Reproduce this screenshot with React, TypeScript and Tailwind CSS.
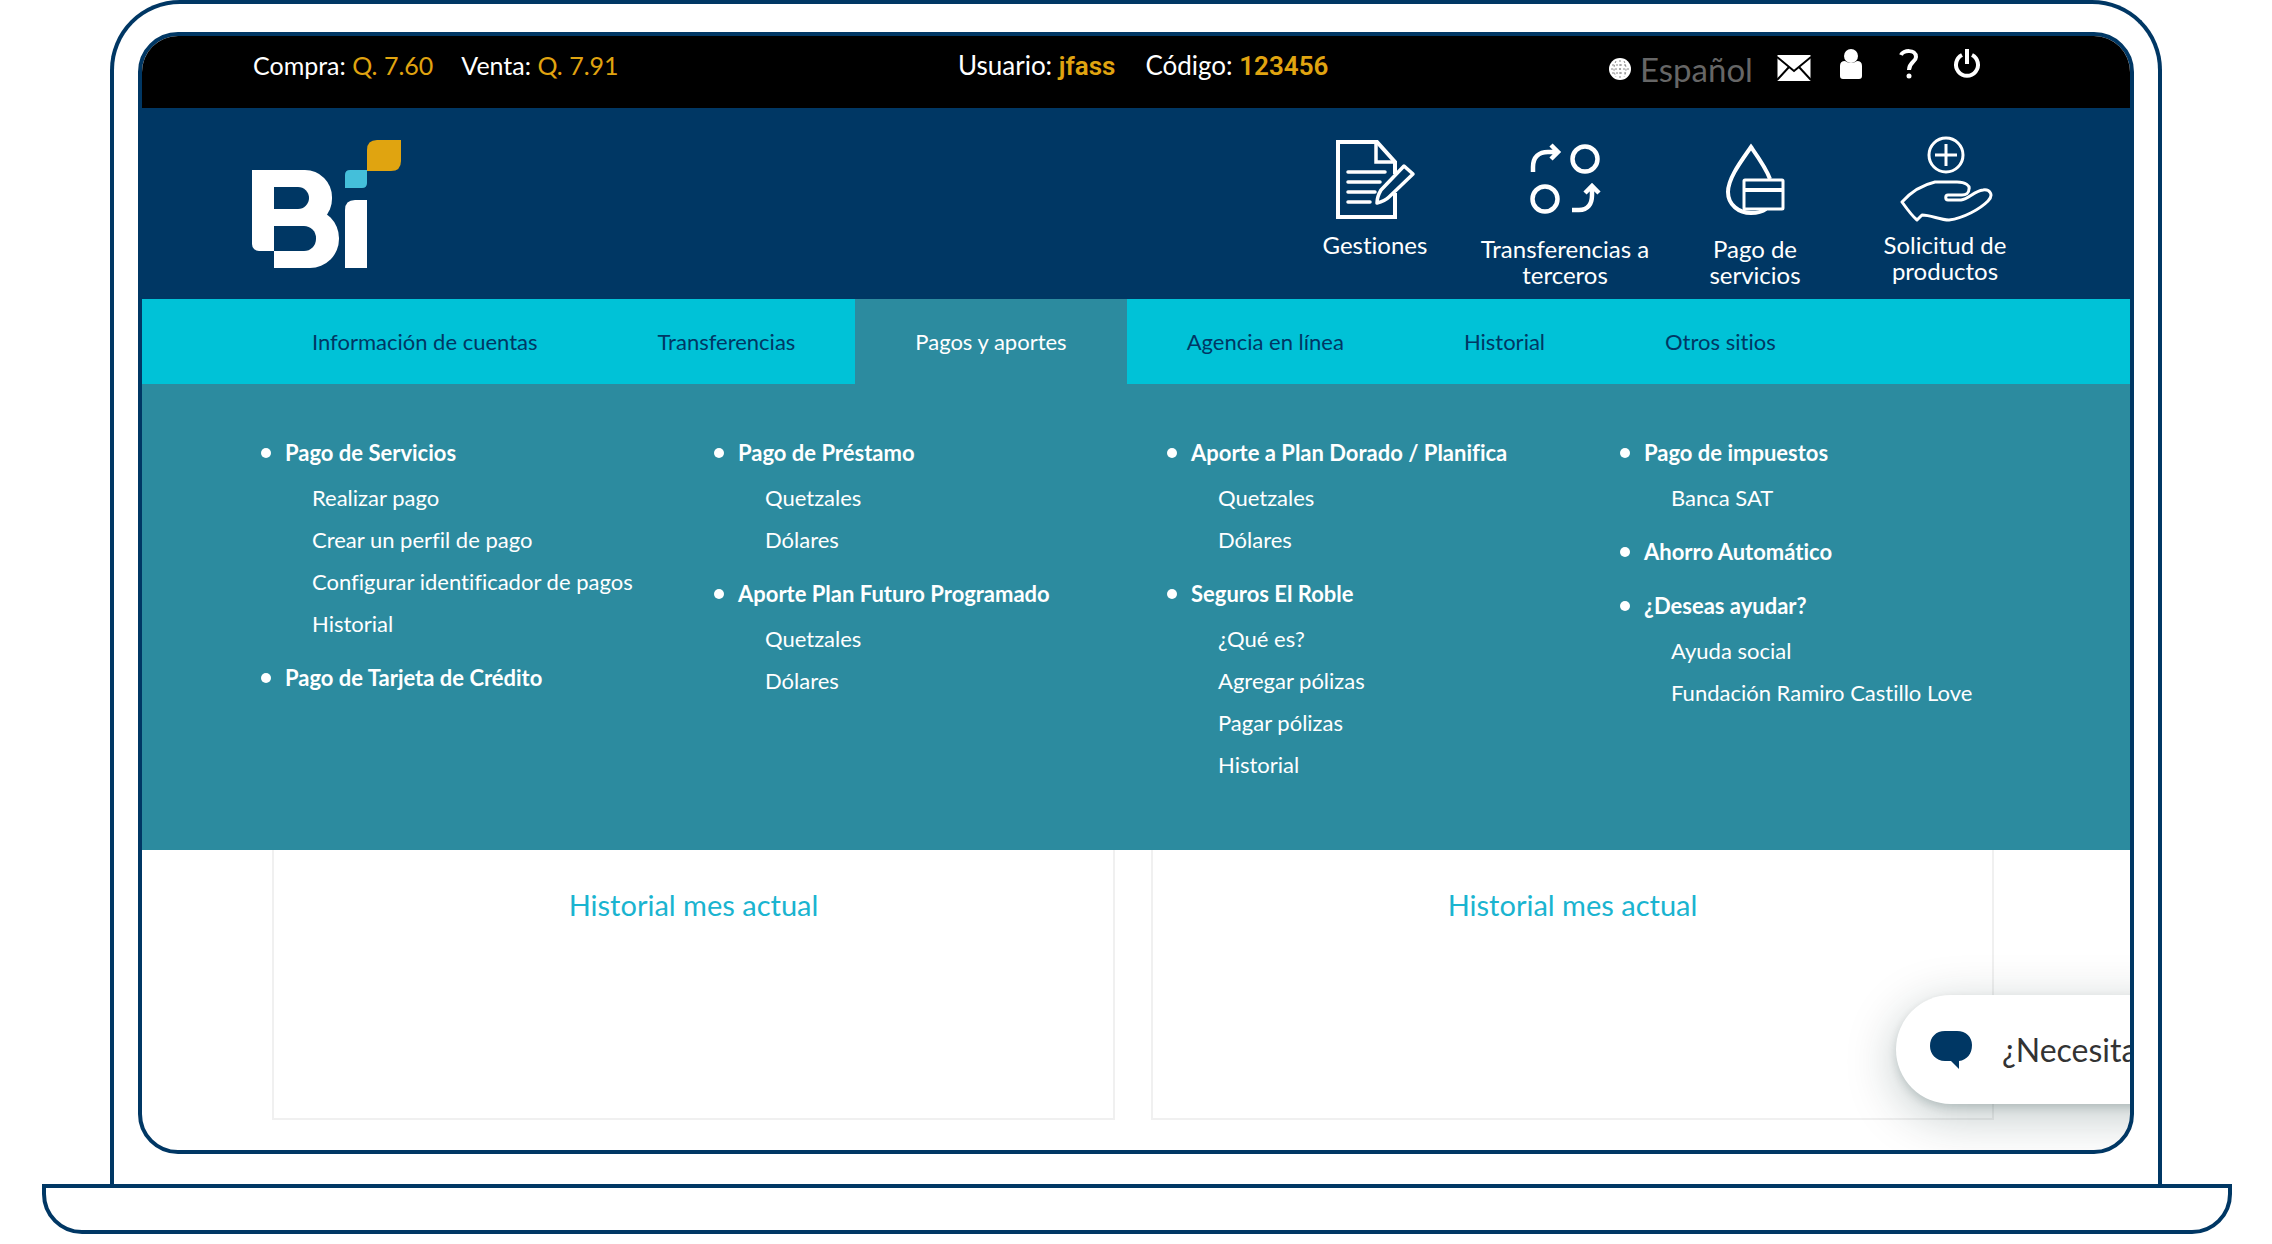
import React from 'react';

const tabs = [
	'Información de cuentas',
	'Transferencias',
	'Pagos y aportes',
	'Agencia en línea',
	'Historial',
	'Otros sitios',
];

const activeTab = 'Pagos y aportes';

const menuColumns = [
	[
		{
			title: 'Pago de Servicios',
			items: ['Realizar pago', 'Crear un perfil de pago', 'Configurar identificador de pagos', 'Historial'],
		},
		{ title: 'Pago de Tarjeta de Crédito', items: [] },
	],
	[
		{ title: 'Pago de Préstamo', items: ['Quetzales', 'Dólares'] },
		{ title: 'Aporte Plan Futuro Programado', items: ['Quetzales', 'Dólares'] },
	],
	[
		{ title: 'Aporte a Plan Dorado / Planifica', items: ['Quetzales', 'Dólares'] },
		{ title: 'Seguros El Roble', items: ['¿Qué es?', 'Agregar pólizas', 'Pagar pólizas', 'Historial'] },
	],
	[
		{ title: 'Pago de impuestos', items: ['Banca SAT'] },
		{ title: 'Ahorro Automático', items: [] },
		{ title: '¿Deseas ayudar?', items: ['Ayuda social', 'Fundación Ramiro Castillo Love'] },
	],
];

function Logo() {
	return (
		<svg className="h-32 w-[150px]" viewBox="0 0 150 128" role="img" aria-label="Bi">
			<g fill="#fff">
				<rect x="0" y="30" width="40" height="81" rx="7" />
				<rect x="0" y="30" width="40" height="40" />
				<rect x="22" y="30" width="58" height="56" rx="27" />
				<rect x="22" y="30" width="30" height="50" />
				<rect x="22" y="69" width="65" height="59" rx="29" />
				<rect x="22" y="69" width="30" height="59" />
			</g>
			<g fill="#003764">
				<rect x="22" y="47" width="35" height="22" rx="11" />
				<rect x="22" y="47" width="14" height="22" />
				<rect x="22" y="86" width="42" height="25" rx="12" />
				<rect x="22" y="86" width="14" height="25" />
				<rect x="0" y="111" width="22" height="17" />
			</g>
			<path d="M93 70Q93 60 103 60H115V128H93Z" fill="#fff" />
			<path d="M93 35Q93 30 98 30H115V43Q115 48 110 48H93Z" fill="#44bfda" />
			<path d="M115 10Q115 0 125 0H149V21Q149 31 139 31H115Z" fill="#e0a410" />
		</svg>
	);
}

function GestionesIcon() {
	return (
		<svg className="h-24 w-24" viewBox="0 0 96 96" fill="none" stroke="#fff" strokeWidth="4" aria-hidden="true">
			<path d="M68 38V26L50 6H11V81H68V57" />
			<path d="M49 7V26H67" strokeWidth="3.5" />
			<path d="M21 36H58M21 46H53M21 56H48M21 66H43" strokeWidth="3.5" strokeLinecap="round" />
			<path
				d="M77 30L86 38L62 61C58 65 54 66 50 67C50 63 51 59 54 54Z"
				fill="#003764"
				strokeWidth="3.5"
				strokeLinejoin="round"
			/>
		</svg>
	);
}

function TercerosIcon() {
	return (
		<svg className="h-24 w-24" viewBox="0 0 96 96" fill="none" stroke="#fff" strokeWidth="4.5" aria-hidden="true">
			<circle cx="68" cy="19" r="12.5" />
			<circle cx="28" cy="59" r="12.5" />
			<path d="M16 32V27C16 17 22 12 31 12H39M34 5L41 12L34 19" />
			<path d="M55 70H62C71 70 75 64 75 55V47M68 53L75 46L82 53" />
		</svg>
	);
}

function ServiciosIcon() {
	return (
		<svg className="h-24 w-24" viewBox="0 0 96 96" fill="none" stroke="#fff" strokeWidth="4" aria-hidden="true">
			<path d="M63 39C59 28 51 17 44 7C35 20 21 38 21 52C21 65 32 73 44 73C50 73 55 72 59 69" />
			<rect x="37" y="40" width="39" height="29" rx="1" fill="#003764" strokeWidth="3" />
			<path d="M37 50H76" />
		</svg>
	);
}

function ProductosIcon() {
	return (
		<svg className="h-24 w-24" viewBox="0 0 96 96" fill="none" stroke="#fff" strokeWidth="3" aria-hidden="true">
			<circle cx="49" cy="19" r="17" />
			<path d="M49 8V30M38 19H60" />
			<path
				d="M5 66C13 57 25 49 38 46H60C69 46 73 50 72 53C72 57 69 59 65 59H51C48 59 48 64 51 64H64C72 63 77 55 86 54C93 53 97 59 91 65C83 73 67 82 52 84C43 84 34 79 25 79L20 84C15 80 10 73 5 66Z"
				strokeLinejoin="round"
			/>
		</svg>
	);
}

const actions = [
	{ label: 'Gestiones', icon: <GestionesIcon />, spacing: '' },
	{ label: 'Transferencias a terceros', icon: <TercerosIcon />, spacing: 'pt-1' },
	{ label: 'Pago de servicios', icon: <ServiciosIcon />, spacing: 'pt-1' },
	{ label: 'Solicitud de productos', icon: <ProductosIcon />, spacing: '' },
];

function TopBar() {
	return (
		<div className="grid h-[72px] grid-cols-[705fr_650fr_522fr] bg-black pt-3 pl-[111px] text-[26px] leading-[34px] whitespace-nowrap text-white">
			<div className="flex gap-7 text-[25px]">
				<span>
					Compra: <span className="text-[#e0a410]">Q. 7.60</span>
				</span>
				<span>
					Venta: <span className="text-[#e0a410]">Q. 7.91</span>
				</span>
			</div>

			<div className="flex gap-[30px]">
				<span>
					Usuario: <span className="font-[Roboto] font-semibold text-[#e0a410]">jfass</span>
				</span>
				<span>
					Código: <span className="font-[Roboto] font-semibold text-[#e0a410]">123456</span>
				</span>
			</div>

			<div className="flex items-start">
				<button className="flex items-center gap-2 pt-1 text-[33px] text-[#666]">
					<svg className="h-6 w-6" viewBox="0 0 24 24" aria-hidden="true">
						<circle cx="12" cy="12" r="11" fill="#fff" />
						<path
							d="M4 8H20M3 12H21M4 16H20M12 3V21M8 4Q4 12 8 20M16 4Q20 12 16 20"
							fill="none"
							stroke="#888"
							strokeDasharray="2 2"
						/>
					</svg>
					Español
				</button>
				<a href="#mensajes" aria-label="Mensajes" className="ml-6 pt-[6px]">
					<svg className="h-7 w-[34px]" viewBox="0 0 34 28">
						<rect x="0.5" y="1" width="33" height="26" fill="#fff" />
						<path d="M0 3L17 17L34 3M0 26L12 13M34 26L22 13" fill="none" stroke="#000" strokeWidth="2" />
					</svg>
				</a>
				<a href="#perfil" aria-label="Perfil" className="ml-7">
					<svg className="h-8 w-6" viewBox="0 0 24 32" fill="#fff">
						<circle cx="12" cy="8" r="7" />
						<path d="M1 18Q1 13 6 13Q12 17 18 13Q23 13 23 18V28Q23 31 20 31H4Q1 31 1 28Z" />
					</svg>
				</a>
				<a href="#ayuda" aria-label="Ayuda" className="ml-9">
					<svg className="h-8 w-5" viewBox="0 0 20 32" fill="none" stroke="#fff" strokeWidth="4">
						<path d="M2 7C4 2 17 1 17 9C17 14 10 14 10 22" />
						<circle cx="10" cy="28" r="2.5" fill="#fff" stroke="none" />
					</svg>
				</a>
				<button aria-label="Salir" className="ml-8">
					<svg className="h-8 w-8" viewBox="0 0 32 32" fill="none" stroke="#fff" strokeWidth="4">
						<path d="M11 7A11 11 0 1 0 21 7M16 1V16" />
					</svg>
				</button>
			</div>
		</div>
	);
}

function Header() {
	return (
		<header className="flex h-[191px] justify-between bg-[#003764] pr-[90px] pl-[110px]">
			<a href="#inicio" className="pt-8">
				<Logo />
			</a>

			<div className="grid grid-cols-[repeat(4,190px)] pt-7 text-white">
				{actions.map((action) => (
					<a key={action.label} href="#accion" className={`flex flex-col items-center ${action.spacing}`}>
						{action.icon}
						<span className="w-[180px] text-center text-2xl leading-[26px]">{action.label}</span>
					</a>
				))}
			</div>
		</header>
	);
}

function Navigation() {
	return (
		<nav className="flex bg-[#00c2d7] pl-[110px] text-[22px] leading-[85px] whitespace-nowrap">
			{tabs.map((tab) => (
				<a
					key={tab}
					href="#menu"
					className={tab === activeTab ? 'bg-[#2c8b9f] px-[60px] text-white' : 'px-[60px] text-[#003764]'}
				>
					{tab}
				</a>
			))}
		</nav>
	);
}

function MegaMenu() {
	return (
		<div className="grid min-h-[466px] grid-cols-4 bg-[#2c8b9f] pt-12 pr-[57px] pb-10 pl-[119px] text-[22px] leading-[42px] whitespace-nowrap text-white">
			{menuColumns.map((groups, index) => (
				<ul key={index} className="flex flex-col gap-3">
					{groups.map((group) => (
						<li key={group.title}>
							<a href="#grupo" className="flex items-center gap-[14px] font-bold">
								<span className="h-[10px] w-[10px] rounded-full bg-white" />
								{group.title}
							</a>
							{group.items.length > 0 && (
								<ul className="pt-[3px] pl-[51px]">
									{group.items.map((item) => (
										<li key={item}>
											<a href="#opcion">{item}</a>
										</li>
									))}
								</ul>
							)}
						</li>
					))}
				</ul>
			))}
		</div>
	);
}

function HistoryCard() {
	return (
		<section className="h-[270px] border-2 border-t-0 border-[#f0f0f0] pt-9 text-center">
			<h2 className="text-[29px] leading-[38px] text-[#1ab4d0]">Historial mes actual</h2>
		</section>
	);
}

export default function App() {
	return (
		<div className="bg-white pr-10 pb-[10px] pl-[42px] font-[Lato,sans-serif] [font-variant-ligatures:none]">
			<div className="mr-[70px] ml-[68px] rounded-t-[70px] border-4 border-b-0 border-[#003764] px-6 pt-7 pb-[30px]">
				<div className="relative overflow-hidden rounded-[40px] border-4 border-[#003764]">
					<TopBar />
					<Header />
					<Navigation />
					<MegaMenu />

					<main className="grid grid-cols-2 gap-9 pr-[136px] pb-[30px] pl-[130px]">
						<HistoryCard />
						<HistoryCard />
					</main>

					<button className="absolute -right-20 bottom-[46px] flex h-[109px] w-[314px] items-center gap-[30px] rounded-full bg-white pl-[34px] text-[32px] whitespace-nowrap text-[#333] shadow-[0_12px_50px_rgba(0,40,40,0.25),0_4px_8px_rgba(0,40,40,0.15)]">
						<svg className="h-10 w-[42px]" viewBox="0 0 42 40" fill="#003764" aria-hidden="true">
							<path d="M15 1H27C36 1 42 7 42 15C42 24 37 30 29 31V39L21 31H15C6 31 0 24 0 16C0 7 6 1 15 1Z" />
						</svg>
						¿Necesita
					</button>
				</div>
			</div>
			<div className="h-[50px] rounded-b-[40px] border-4 border-[#003764]" />
		</div>
	);
}
